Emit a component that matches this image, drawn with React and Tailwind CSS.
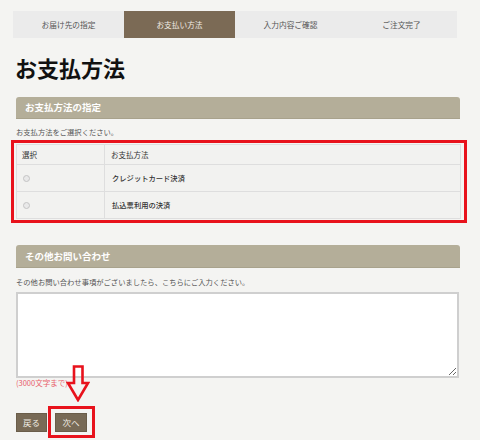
import React from "react";

function Radio() {
  return (
    <span className="inline-block w-[7px] h-[7px] rounded-full border border-[#c4c4c4] bg-[#e9e9e9]" />
  );
}

export default function App() {
  const tabs = ["お届け先の指定", "お支払い方法", "入力内容ご確認", "ご注文完了"];
  return (
    <div className="relative min-h-[440px] w-[480px] bg-[#f4f4f2] pt-[11px] font-['Noto_Sans_CJK_JP','Noto_Sans',sans-serif] text-[#444]">
      <div className="ml-[13px] w-[444px] flex">
        {tabs.map((t, i) => (
          <div
            key={t}
            className={
              i === 1
                ? "flex-1 h-[27px] flex items-center justify-center text-[7.7px] bg-[#7b6a55] text-[#f1ece4]"
                : "flex-1 h-[27px] flex items-center justify-center text-[7.7px] bg-[#ebebeb] text-[#555]"
            }
          >
            {t}
          </div>
        ))}
      </div>

      <h1 className="ml-[15px] mt-[14px] text-[22px] leading-[30px] font-bold text-[#111]">お支払方法</h1>

      <div className="ml-[16px] w-[444px]">
        <div className="mt-[15px] h-[22px] rounded-t-[3px] bg-[#b4ae99] border-b border-[#a8a28c] flex items-center pl-[9px] text-[9.5px] font-bold text-white">
          お支払方法の指定
        </div>
        <p className="mt-[7px] text-[7.3px] leading-[12px] text-[#555]">お支払方法をご選択ください。</p>

        <div className="mt-[2px] -ml-[5px] w-[456px] border-[3px] border-[#e8121c] pt-[1px] pb-[1px] pl-[2px] pr-[3px]">
          <div className="border border-[#dedede] bg-[#f2f2f0]">
            <div className="flex h-[20px] border-b border-[#dedede]">
              <div className="w-[88px] border-r border-[#dedede] flex items-center pl-[5px] text-[7.5px] text-[#333]">選択</div>
              <div className="flex-1 flex items-center pl-[6px] text-[7.5px] text-[#333]">お支払方法</div>
            </div>
            <div className="flex h-[27px] border-b border-[#dedede]">
              <div className="w-[88px] border-r border-[#dedede] flex items-center pl-[6px]"><Radio /></div>
              <div className="flex-1 flex items-center pl-[7px] text-[7.3px] font-medium text-[#333]">クレジットカード決済</div>
            </div>
            <div className="flex h-[26px]">
              <div className="w-[88px] border-r border-[#dedede] flex items-center pl-[6px]"><Radio /></div>
              <div className="flex-1 flex items-center pl-[7px] text-[7.3px] font-medium text-[#333]">払込票利用の決済</div>
            </div>
          </div>
        </div>

        <div className="mt-[22px] h-[23px] rounded-t-[3px] bg-[#b4ae99] border-b border-[#a8a28c] flex items-center pl-[9px] text-[9.5px] font-bold text-white">
          その他お問い合わせ
        </div>
        <p className="mt-[8px] text-[7.3px] leading-[12px] text-[#555]">その他お問い合わせ事項がございましたら、こちらにご入力ください。</p>
        <textarea className="mt-[4px] block w-[443px] h-[86px] bg-white border-2 border-[#cfcfcf] outline-none" />
        <p className="text-[7.5px] leading-[10px] text-[#e8606a]">(3000文字まで)</p>

        <div className="mt-[18px] flex items-center">
          <button className="w-[31px] h-[19px] bg-[#786a56] border border-[#6a5d4a] text-[8.5px] text-[#f1ece4] flex items-center justify-center">戻る</button>
          <div className="ml-[1px] border-[3px] border-[#e8121c] pt-[4px] pb-[3px] pl-[4px] pr-[5px]">
            <button className="w-[32px] h-[19px] bg-[#786a56] border border-[#6a5d4a] text-[8.5px] text-[#f1ece4] flex items-center justify-center">次へ</button>
          </div>
        </div>
      </div>

      <svg className="absolute left-[66px] top-[365px]" width="24" height="37" viewBox="0 0 24 37">
        <polygon points="8,1.5 16.5,1.5 16.5,18 22,18 12,35 2,18 8,18" fill="none" stroke="#e8121c" strokeWidth="2.6" strokeLinejoin="miter" />
      </svg>
    </div>
  );
}
